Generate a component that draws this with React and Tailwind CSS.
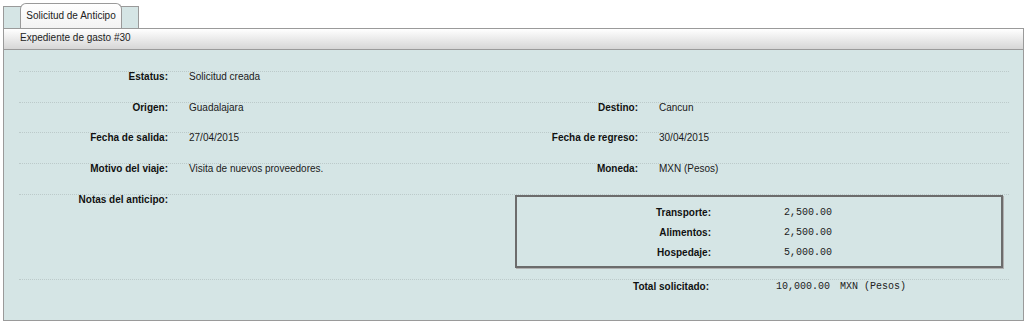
import React from "react";

const rows = [
    { h: "h-[31px]", l1: "Estatus:", v1: "Solicitud creada" },
    { h: "h-[30px]", l1: "Origen:", v1: "Guadalajara", l2: "Destino:", v2: "Cancun" },
    { h: "h-[31px]", l1: "Fecha de salida:", v1: "27/04/2015", l2: "Fecha de regreso:", v2: "30/04/2015" },
    { h: "h-[31px]", l1: "Motivo del viaje:", v1: "Visita de nuevos proveedores.", l2: "Moneda:", v2: "MXN (Pesos)" },
];

const conceptos = [
    { label: "Transporte:", monto: "2,500.00" },
    { label: "Alimentos:", monto: "2,500.00" },
    { label: "Hospedaje:", monto: "5,000.00" },
];

const App = () => {
    return (
        <div className="bg-white h-[324px] text-[10px] text-[#1a1a1a] font-['Liberation_Sans',Arial,sans-serif]">
            {/* Tabs */}
            <div className="ml-[3px] mt-[6px] w-[136px] h-[22px] bg-[#d5e5e5] border border-b-0 border-[#9a9a9a] pl-[16px] flex items-end">
                <div className="h-[25px] w-[102px] shrink-0 rounded-t-[6px] border border-b-0 border-[#9a9a9a] bg-gradient-to-b from-white to-[#f3f3f3] text-center leading-[24px] text-[#222]">
                    Solicitud de Anticipo
                </div>
            </div>

            <div className="ml-[3px] w-[1021px] border-x border-[#9a9a9a]">
                {/* Header */}
                <div className="h-[22px] border-y border-[#9a9a9a] bg-gradient-to-b from-white to-[#d6d6d6] pl-[16px] leading-[18px] text-[#222]">
                    Expediente de gasto #30
                </div>

                {/* Body */}
                <div className="bg-[#d5e5e5] border-b border-[#9a9a9a] pl-[15px] pr-[14px] pt-[21px] pb-[10px]">
                    {rows.map((r) => (
                        <div key={r.l1} className={`${r.h} border-t border-dotted border-[#bccaca] grid grid-cols-[149px_279px_149px_1fr] gap-x-[21px]`}>
                            <div className="-mt-[1px] leading-[12px] text-right font-bold text-[#111]">{r.l1}</div>
                            <div className="-mt-[1px] leading-[12px]">{r.v1}</div>
                            <div className="-mt-[1px] leading-[12px] text-right font-bold text-[#111]">{r.l2}</div>
                            <div className="-mt-[1px] leading-[12px]">{r.v2}</div>
                        </div>
                    ))}

                    {/* Notas + desglose */}
                    <div className="h-[85px] border-t border-dotted border-[#bccaca] flex">
                        <div className="w-[149px] -mt-[1px] leading-[12px] text-right font-bold text-[#111]">Notas del anticipo:</div>
                        <div className="ml-auto mr-[6px] w-[488px] h-[73px] border-2 border-[#6c6c6c] shadow-[1px_1px_0_#b0b0b0] pt-[6px] pb-[3px]">
                            {conceptos.map((c) => (
                                <div key={c.label} className="flex leading-[20px]">
                                    <div className="w-[194px] text-right font-bold text-[#111]">{c.label}</div>
                                    <div className="w-[121px] text-right font-['Liberation_Mono','Courier_New',monospace] text-[#222]">{c.monto}</div>
                                </div>
                            ))}
                        </div>
                    </div>

                    {/* Total */}
                    <div className="h-[31px] border-t border-dotted border-[#bccaca] flex justify-end">
                        <div className="w-[494px] flex mt-[1px] leading-[12px]">
                            <div className="w-[194px] text-right font-bold text-[#111]">Total solicitado:</div>
                            <div className="w-[121px] text-right font-['Liberation_Mono','Courier_New',monospace] text-[#222]">10,000.00</div>
                            <div className="ml-[10px] font-['Liberation_Mono','Courier_New',monospace] text-[#222]">MXN (Pesos)</div>
                        </div>
                    </div>
                </div>
            </div>
        </div>
    );
};

export default App;
